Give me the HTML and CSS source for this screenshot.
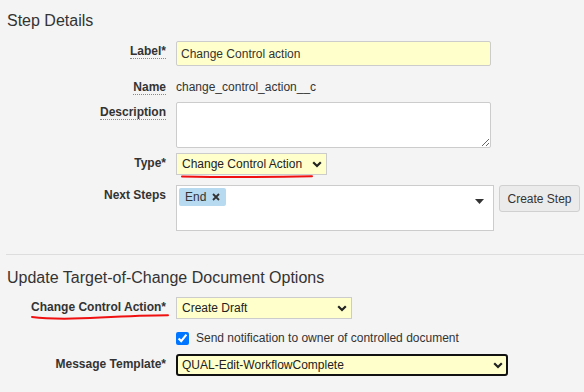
FILE: index.html
```html
<!DOCTYPE html>
<html>
<head>
<meta charset="utf-8">
<link rel="stylesheet" href="styles.css">
</head>
<body>
<div class="page">
  <h2 class="section-title first">Step Details</h2>

  <div class="row row-label">
    <div class="lbl"><span class="dotted">Label*</span></div>
    <div class="ctl"><input class="text-input req" type="text" value="Change Control action"></div>
  </div>

  <div class="row row-name">
    <div class="lbl"><span class="dotted">Name</span></div>
    <div class="ctl value">change_control_action__c</div>
  </div>

  <div class="row row-desc">
    <div class="lbl"><span class="dotted">Description</span></div>
    <div class="ctl"><textarea class="textarea"></textarea></div>
  </div>

  <div class="row row-type">
    <div class="lbl">Type*</div>
    <div class="ctl">
      <div class="select-wrap sel-type">
        <select class="select"><option>Change Control Action</option></select>
        <svg class="chev" width="10" height="7" viewBox="0 0 10 7"><path d="M1.2 1.2 L5 5 L8.8 1.2" fill="none" stroke="#222" stroke-width="2.2"/></svg>
      </div>
    </div>
  </div>

  <div class="row row-next">
    <div class="lbl">Next Steps</div>
    <div class="ctl ctl-next">
      <div class="multi">
        <span class="token">End
          <svg class="token-x" width="8" height="8" viewBox="0 0 8 8"><path d="M1 1 L7 7 M7 1 L1 7" stroke="#333" stroke-width="1.8"/></svg>
        </span>
        <svg class="caret" width="9" height="5" viewBox="0 0 9 5"><path d="M0 0 H9 L4.5 5 Z" fill="#333"/></svg>
      </div>
      <button class="btn">Create Step</button>
    </div>
  </div>

  <hr class="sep">

  <h2 class="section-title second">Update Target-of-Change Document Options</h2>

  <div class="row row-cca">
    <div class="lbl">Change Control Action*</div>
    <div class="ctl">
      <div class="select-wrap sel-cca">
        <select class="select"><option>Create Draft</option></select>
        <svg class="chev" width="10" height="7" viewBox="0 0 10 7"><path d="M1.2 1.2 L5 5 L8.8 1.2" fill="none" stroke="#222" stroke-width="2.2"/></svg>
      </div>
    </div>
  </div>

  <div class="row row-check">
    <div class="lbl"></div>
    <div class="ctl check-ctl">
      <input class="check" type="checkbox" checked>
      <span>Send notification to owner of controlled document</span>
    </div>
  </div>

  <div class="row row-msg">
    <div class="lbl">Message Template*</div>
    <div class="ctl">
      <div class="select-wrap sel-msg">
        <select class="select focused"><option>QUAL-Edit-WorkflowComplete</option></select>
        <svg class="chev" width="10" height="7" viewBox="0 0 10 7"><path d="M1.2 1.2 L5 5 L8.8 1.2" fill="none" stroke="#222" stroke-width="2.2"/></svg>
      </div>
    </div>
  </div>

  <svg class="annot" width="584" height="392" viewBox="0 0 584 392">
    <path d="M182 176.6 Q 250 177.8 312 176.2" fill="none" stroke="#f01010" stroke-width="2" stroke-linecap="round"/>
    <path d="M32 317 Q 55 320 100 317.6 T 168 315.2" fill="none" stroke="#f01010" stroke-width="2" stroke-linecap="round"/>
  </svg>
</div>
</body>
</html>
```
FILE: styles.css
```css
html, body {
  margin: 0;
  padding: 0;
  background: #f4f4f4;
}
body {
  font-family: "Liberation Sans", Arial, sans-serif;
  font-size: 12px;
  color: #333;
  width: 584px;
  height: 392px;
  overflow: hidden;
}
.page {
  position: relative;
  padding: 0 0 0 7px;
  height: 392px;
}
.section-title {
  margin: 0;
  font-size: 16px;
  font-weight: normal;
  line-height: 20px;
  color: #333;
}
.section-title.first {
  padding-top: 11px;
}
.section-title.second {
  margin-top: 13px;
}
.row {
  display: flex;
  gap: 10px;
}
.lbl {
  width: 159px;
  flex: none;
  text-align: right;
  font-weight: bold;
  padding-top: 3px;
  line-height: 15px;
}
.dotted {
  border-bottom: 1px dotted #888;
}
.ctl {
  display: flex;
  align-items: flex-start;
}
.value {
  padding-top: 3px;
  line-height: 15px;
}
.row-label { margin-top: 10px; }
.row-name { margin-top: 11px; }
.row-desc { margin-top: 7px; }
.row-type { margin-top: 5px; }
.row-next { margin-top: 10px; }
.row-cca { margin-top: 9px; }
.row-check { margin-top: 12px; }
.row-msg { margin-top: 8px; }

.text-input {
  box-sizing: border-box;
  width: 315px;
  height: 25px;
  margin: 0;
  border: 1px solid #ccc;
  border-radius: 2px;
  padding: 0 4px;
  font-family: "Liberation Sans", Arial, sans-serif;
  font-size: 12px;
  color: #333;
  outline: none;
}
.req {
  background: #ffffcc;
}
.textarea {
  box-sizing: border-box;
  width: 315px;
  height: 46px;
  margin: 0;
  border: 1px solid #ccc;
  border-radius: 2px;
  background: #fff;
  font-family: "Liberation Sans", Arial, sans-serif;
  font-size: 12px;
  display: block;
}
.select-wrap {
  position: relative;
  height: 22px;
}
.sel-type { width: 151px; }
.sel-cca { width: 176px; }
.sel-msg { width: 332px; }
.select {
  -webkit-appearance: none;
  appearance: none;
  box-sizing: border-box;
  width: 100%;
  height: 22px;
  margin: 0;
  padding: 0 18px 0 5px;
  border: 1px solid #ccc;
  border-radius: 0;
  background: #ffffcc;
  font-family: "Liberation Sans", Arial, sans-serif;
  font-size: 12px;
  color: #222;
  outline: none;
}
.select.focused {
  border: 2px solid #111;
  border-radius: 3px;
  padding-left: 4px;
}
.chev {
  position: absolute;
  right: 5px;
  top: 8px;
  pointer-events: none;
}
.ctl-next {
  gap: 5px;
}
.multi {
  position: relative;
  box-sizing: border-box;
  width: 318px;
  height: 46px;
  border: 1px solid #ccc;
  background: #fff;
  padding: 2px 0 0 2px;
}
.token {
  display: inline-flex;
  align-items: center;
  gap: 6px;
  height: 18px;
  padding: 0 6px 0 6px;
  background: #b7daf0;
  border-radius: 2px;
  font-size: 12px;
  color: #333;
  line-height: 18px;
}
.token-x {
  display: block;
}
.caret {
  position: absolute;
  right: 9px;
  top: 13px;
}
.btn {
  box-sizing: border-box;
  width: 81px;
  height: 27px;
  margin: 0;
  border: 1px solid #d0d0d0;
  border-radius: 3px;
  background: #ebebeb;
  font-family: "Liberation Sans", Arial, sans-serif;
  font-size: 12px;
  color: #333;
  padding: 0;
}
.sep {
  margin: 23px 0 0 -1px;
  border: 0;
  border-top: 1px solid #ddd;
  height: 0;
}
.check-ctl {
  align-items: flex-start;
  gap: 7px;
  line-height: 15px;
}
.check {
  width: 13px;
  height: 13px;
  margin: 1px 0 0 0;
  accent-color: #0075ff;
}
.annot {
  position: absolute;
  left: 0;
  top: 0;
  pointer-events: none;
}
```
